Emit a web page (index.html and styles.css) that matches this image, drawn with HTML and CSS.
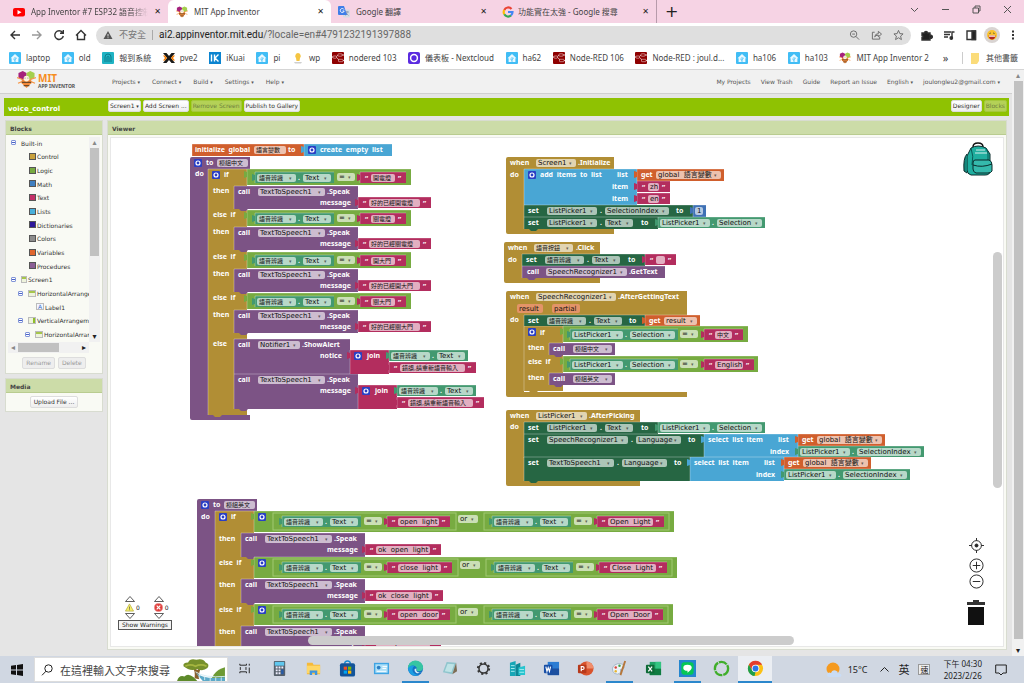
FILE: index.html
```html
<!DOCTYPE html>
<html lang="en">
<head>
<meta charset="utf-8">
<title>MIT App Inventor</title>
<link rel="stylesheet" href="styles.css">
</head>
<body>
<svg class="defs" aria-hidden="true">
  <symbol id="ha" viewBox="0 0 12 12"><rect width="12" height="12" rx="1" fill="#41bdf5"/><path d="M6 2 10.5 6.2H9.4V10H2.600V6.200H1.500Z" fill="#e8f8ff"/><path d="M6 10V5M6 8.500 4.200 6.800M6 7.500 7.800 6" stroke="#41bdf5" fill="none" stroke-width=".8"/></symbol>
  <symbol id="nr" viewBox="0 0 12 12"><rect width="12" height="12" rx="1" fill="#8f0000"/><path d="M0 5H3C5 5 5 3 7 3H12M3 5C6 5 6 8.500 8 8.500H12" stroke="#e9c7c7" fill="none"/><rect x="6" y="1.800" width="4" height="2.400" rx=".6" fill="#8f0000" stroke="#e9c7c7" stroke-width=".6"/><rect x="6.500" y="7.300" width="4.500" height="2.400" rx=".6" fill="#8f0000" stroke="#e9c7c7" stroke-width=".6"/><rect x="1" y="4" width="3.500" height="2.200" rx=".6" fill="#8f0000" stroke="#e9c7c7" stroke-width=".6"/></symbol>
  <symbol id="bee" viewBox="0 0 20 18"><path d="M6 0 10 2V7L6 9.500 1.500 7V2Z" fill="#a5217c"/><path d="M14 0 18.500 2V7L14 9.500 10 7V2Z" fill="#a4cf4c"/><path d="M0 7 6 9M20 7 14 9M1 13 6 11M19 13 14 11" stroke="#f79646" stroke-width="1.200"/><path d="M5 9H15V13L10 18 5 13Z" fill="#f58a3a"/><path d="M5 12H15M7 15.500H13" stroke="#6f4b2a" stroke-width="1.500"/><circle cx="10" cy="8" r="3" fill="#fff3df"/><path d="M8.500 8v-1M11.500 8v-1" stroke="#555" stroke-width=".8"/></symbol>
</svg>

<header class="tabs">
  <div class="tab"><svg class="fav" viewBox="0 0 12 12"><rect y="2" width="12" height="8.500" rx="2" fill="#f00"/><path d="M4.500 4 8.500 6.200 4.500 8.500Z" fill="#fff"/></svg><span class="tab-title faded">App Inventor #7 ESP32 語音控制</span><button class="x" aria-label="Close tab">✕</button></div>
  <div class="tab active"><svg class="fav"><use href="#bee"/></svg><span class="tab-title">MIT App Inventor</span><button class="x" aria-label="Close tab">✕</button></div>
  <div class="tab google"><svg class="fav" viewBox="0 0 12 12"><rect x="5" y="3.500" width="7" height="8" rx="1" fill="#d5dbe3"/><path d="M7 6h4M9 5v1c0 2-1 3-2 3.500M8 7l2.500 2.500" stroke="#7a8ea8" stroke-width=".7" fill="none"/><path d="M1 0H6L9 9H1Q0 9 0 8V1Q0 0 1 0Z" fill="#3f7ee8"/><path d="M6 3.500A2 2 0 1 0 6.200 5H4.500" stroke="#fff" fill="none" stroke-width=".9"/></svg><span class="tab-title">Google 翻譯</span><button class="x" aria-label="Close tab">✕</button></div>
  <div class="tab divided"><svg class="fav" viewBox="0 0 12 12" fill="none" stroke-width="2.200"><path d="M9.500 3A4.300 4.300 0 0 0 2.300 4" stroke="#ea4335"/><path d="M2.300 4A4.300 4.300 0 0 0 2.300 8.300" stroke="#fbbc05"/><path d="M2.300 8.300A4.300 4.300 0 0 0 9 9.400" stroke="#34a853"/><path d="M6 6H10.500Q10.500 8.200 9 9.400" stroke="#4285f4"/></svg><span class="tab-title">功能實在太強 - Google 搜尋</span><button class="x" aria-label="Close tab">✕</button></div>
  <button class="newtab" aria-label="New tab">+</button>
  <div class="winctl">
    <svg viewBox="0 0 9 9"><path d="M1 3 4.500 6.500 8 3"/></svg><svg viewBox="0 0 9 9"><path d="M1 4.500H8"/></svg><svg viewBox="0 0 9 9"><path d="M1 3H6.500V8H1ZM3 3V1H8V6H6.500"/></svg><svg viewBox="0 0 9 9"><path d="M1 1 8 8M8 1 1 8"/></svg>
  </div>
</header>

<nav class="toolbar">
  <svg class="nav" viewBox="0 0 12 12"><path d="M11 6H2M6 2 2 6 6 10"/></svg>
  <svg class="nav dim" viewBox="0 0 12 12"><path d="M1 6H10M6 2 10 6 6 10"/></svg>
  <svg class="nav" viewBox="0 0 12 12"><path d="M9.500 3.500A4.300 4.300 0 1 0 10.300 7M10.300 1V4.300H7"/></svg>
  <svg class="nav" viewBox="0 0 12 12"><path d="M1 6.500 6 1.500 11 6.500M2.500 5.500V10.500H9.500V5.500"/></svg>
  <div class="omni">
    <svg class="warn" viewBox="0 0 10 10"><path d="M5 1 9.500 9H.5Z" fill="#555"/><path d="M5 4V6.500M5 7.300V8.200" stroke="#ddd"/></svg>
    <span class="unsafe">不安全</span>
    <label class="urlbox"><span class="host">ai2.appinventor.mit.edu</span><span>/?locale=en#4791232191397888</span></label>
    <svg class="nav thin" viewBox="0 0 12 12"><circle cx="5" cy="5" r="3.500"/><path d="M7.500 7.500 11 11M3.500 5h3"/></svg>
    <svg class="nav thin" viewBox="0 0 12 12"><path d="M4 3H1.500V10.500H9.500V8M4 8Q4.500 4.500 8 4.500V2L11.500 5 8 8V6.200Q5 6.200 4 8"/></svg>
    <svg class="nav thin" viewBox="0 0 12 12"><path d="M6 1 7.500 4.500 11 4.800 8.300 7.200 9.200 11 6 9 2.800 11 3.700 7.200 1 4.800 4.500 4.500Z"/></svg>
  </div>
  <svg class="nav" viewBox="0 0 12 12"><path d="M1 4H3.500A1.500 1.500 0 1 1 6.500 4H9V6.500A1.500 1.500 0 1 1 9 9V11H1V8.500A1 1 0 0 0 1 6.500Z" fill="#222"/></svg>
  <svg class="nav" viewBox="0 0 12 12"><path d="M1 3H8M1 5.500H7M1 8H5M9 9V3H11.500"/><circle cx="8.300" cy="9" r="1.200" fill="#222"/></svg>
  <svg class="nav" viewBox="0 0 12 12"><path d="M2 2H10.500V10.500H2Z"/><path d="M7 2H10.500V10.500H7Z" fill="#222"/></svg>
  <svg class="avatar" viewBox="0 0 16 16"><circle cx="8" cy="8" r="8" fill="#d9d4d2"/><circle cx="8" cy="8" r="5" fill="#f9c22e"/><path d="M4.500 8.500H11.500Q11 12.500 8 12.500 5 12.500 4.500 8.500" fill="#b3261e"/><path d="M5 8.500H11V9.700H5Z" fill="#fff"/><path d="M5.500 6.500 6.800 6M10.500 6.500 9.200 6" stroke="#553" /></svg>
  <svg class="nav dots" viewBox="0 0 12 12"><path d="M6 1.500V3.500M6 5V7M6 8.500V10.500" stroke-width="2"/></svg>
</nav>

<nav class="bookmarks">
  <div class="marks">
    <a href="#"><svg><use href="#ha"/></svg>laptop</a>
    <a href="#"><svg><use href="#ha"/></svg>old</a>
    <a href="#"><svg viewBox="0 0 12 12"><rect width="12" height="12" rx="1" fill="#1fb3c4"/><path d="M3 10V5A3 3 0 0 1 9 5V10M5 10V5.500A1 1 0 0 1 7 5.500V10" stroke="#0d7f8d" fill="none"/></svg>報到系統</a>
    <a href="#"><svg viewBox="0 0 12 12"><path d="M0 1H3.500L6 4 8.500 1H12L8 6 12 11H8.500L6 8 3.500 11H0L4 6Z" fill="#1a1a1a"/><path d="M0 3.500H2L4 6 2 8.500H0L2 6ZM12 3.500H10L8 6 10 8.500H12L10 6Z" fill="#f57c00"/></svg>pve2</a>
    <a href="#"><svg viewBox="0 0 12 12"><rect width="12" height="12" fill="#0b84d0"/><path d="M2.500 2.500V9.500M5.500 2.500V9.500M9.500 2.500 6 6 9.500 9.500" stroke="#fff" stroke-width="1.400" fill="none"/></svg>iKuai</a>
    <a href="#"><svg><use href="#ha"/></svg>pi</a>
    <a href="#"><svg viewBox="0 0 12 12"><path d="M2 10H10L9 11.500H3Z" fill="#cfcfcf"/><path d="M6 1A3 3 0 0 1 8 6L7.500 9H4.500L4 6A3 3 0 0 1 6 1" fill="#f5c542"/></svg>wp</a>
    <a href="#"><svg><use href="#nr"/></svg>nodered 103</a>
    <a href="#"><svg viewBox="0 0 12 12"><rect width="12" height="12" rx="2" fill="#5b2be0"/><circle cx="6" cy="6" r="3.400" fill="none" stroke="#fff" stroke-width="1.500"/></svg>儀表板 - Nextcloud</a>
    <a href="#"><svg><use href="#ha"/></svg>ha62</a>
    <a href="#"><svg><use href="#nr"/></svg>Node-RED 106</a>
    <a href="#"><svg><use href="#nr"/></svg>Node-RED : joul.d...</a>
    <a href="#"><svg><use href="#ha"/></svg>ha106</a>
    <a href="#"><svg><use href="#ha"/></svg>ha103</a>
    <a href="#"><svg><use href="#bee"/></svg>MIT App Inventor 2</a>
  </div>
  <button class="more" aria-label="More bookmarks">»</button>
  <a href="#" class="others"><svg viewBox="0 0 12 12"><path d="M2 1H10V9L8 12H2Z" fill="#fbdc7a"/></svg>其他書籤</a>
</nav>

<div class="page">
  <main class="app">
    <div class="topmenu">
      <svg class="logo-bee"><use href="#bee"/></svg>
      <div class="logo"><b>MIT</b><span>APP INVENTOR</span></div>
      <div class="menu left"><button>Projects <i>▾</i></button><button>Connect <i>▾</i></button><button>Build <i>▾</i></button><button>Settings <i>▾</i></button><button>Help <i>▾</i></button></div>
      <div class="menu right"><button>My Projects</button><button>View Trash</button><button>Guide</button><button>Report an Issue</button><button>English <i>▾</i></button><button>joulongleu2@gmail.com <i>▾</i></button></div>
    </div>
    <div class="greenbar">
      <h1>voice_control</h1>
      <div class="btns"><button>Screen1 <i>▾</i></button><button>Add Screen ...</button><button disabled>Remove Screen</button><button>Publish to Gallery</button></div>
      <div class="btns"><button>Designer</button><button disabled>Blocks</button></div>
    </div>
    <div class="cols">
      <aside>
        <section class="panel">
          <h2>Blocks</h2>
          <div class="treewrap">
            <ul class="tree">
              <li><span class="tg"></span>Built-in</li>
              <li class="d1"><span class="sw control"></span>Control</li>
              <li class="d1"><span class="sw logic"></span>Logic</li>
              <li class="d1"><span class="sw math"></span>Math</li>
              <li class="d1"><span class="sw text"></span>Text</li>
              <li class="d1"><span class="sw lists"></span>Lists</li>
              <li class="d1"><span class="sw dict"></span>Dictionaries</li>
              <li class="d1"><span class="sw colors"></span>Colors</li>
              <li class="d1"><span class="sw vars"></span>Variables</li>
              <li class="d1"><span class="sw procs"></span>Procedures</li>
              <li><span class="tg"></span><span class="comp"></span>Screen1</li>
              <li class="n1"><span class="tg"></span><span class="comp wide"></span>HorizontalArrange</li>
              <li class="n3"><span class="comp lbl">A</span>Label1</li>
              <li class="n1"><span class="tg"></span><span class="comp vert"></span>VerticalArrangem</li>
              <li class="n2"><span class="tg"></span><span class="comp wide"></span>HorizontalArrar</li>
            </ul>
            <div class="vs"><span>▴</span><div class="thumb"></div><span class="dk">▾</span></div>
            <div class="hs"><span>◂</span><div class="thumb"></div><span class="dk">▸</span></div>
          </div>
          <div class="pair"><button disabled>Rename</button><button disabled>Delete</button></div>
        </section>
        <section class="panel media">
          <h2>Media</h2>
          <div class="pair"><button>Upload File ...</button></div>
        </section>
      </aside>
      <section class="panel viewer">
        <h2>Viewer</h2>
        <div class="workspace">
          <svg id="canvas" class="canvas" role="img" aria-label="Blocks workspace"></svg>
          <div class="warnings">
            <div class="counts">
              <div><svg viewBox="0 0 10 6"><path d="M.5 5.500 5 .5 9.500 5.500Z"/></svg><p><svg viewBox="0 0 10 10"><path d="M5 1 9.500 9H.5Z" fill="#f6ee6a" stroke="#b5ad3c"/><path d="M5 4V6.500M5 7V8" stroke="#554"/></svg>0</p><svg viewBox="0 0 10 6"><path d="M.5.5 5 5.500 9.500.5Z"/></svg></div>
              <div><svg viewBox="0 0 10 6"><path d="M.5 5.500 5 .5 9.500 5.500Z"/></svg><p><svg viewBox="0 0 10 10"><circle cx="5" cy="5" r="4.500" fill="#e0403c" stroke="#e88" /><path d="M3 3 7 7M7 3 3 7" stroke="#fff" stroke-width="1.300"/></svg>0</p><svg viewBox="0 0 10 6"><path d="M.5.5 5 5.500 9.500.5Z"/></svg></div>
            </div>
            <button>Show Warnings</button>
          </div>
          <svg class="backpack" viewBox="0 0 30 34"><path d="M10 5Q10 1 15 1T20 5" fill="none" stroke="#111" stroke-width="1.500"/><path d="M8 6Q15 2 23 6L27 12V29Q27 33 22 33H8Q4 32 4 28V14Z" fill="#1fae9f" stroke="#0b2b2b"/><path d="M4 12Q0 16 1 29L4 31" fill="#14877c" stroke="#0b2b2b"/><path d="M8 6Q11 14 9 23M23 6Q26 10 25 18" fill="none" stroke="#075a55"/><path d="M12 18H26Q29 19 29 23V29Q28 31 25 31H13Q10 30 10 27V21Q10 18 12 18Z" fill="#35b9ac" stroke="#0b2b2b"/><path d="M10 23Q19 26 29 22" fill="none" stroke="#0b2b2b"/><path d="M13 8H22M12 11H24" stroke="#d7efec"/></svg>
          <div class="zoomers">
            <svg viewBox="0 0 16 16"><circle cx="8" cy="8" r="5.200"/><circle cx="8" cy="8" r="1.600" fill="#222"/><path d="M8 0V3M8 13V16M0 8H3M13 8H16"/></svg>
            <svg viewBox="0 0 16 16"><circle cx="8" cy="8" r="7"/><path d="M8 4V12M4 8H12"/></svg>
            <svg viewBox="0 0 16 16"><circle cx="8" cy="8" r="7"/><path d="M4 8H12"/></svg>
            <svg class="trash" viewBox="0 0 20 26"><path d="M1 2H7V0H13V2H19V5H1Z" fill="#333" stroke="none"/><path d="M2 7H18V25H2Z" fill="#111" stroke="none"/></svg>
          </div>
          <div class="wv"></div><div class="wh"></div>
        </div>
      </section>
    </div>
  </main>
  <div class="pagescroll"><span>▴</span><div></div><span class="dk">▾</span></div>
</div>

<footer class="taskbar">
  <svg class="start" viewBox="0 0 12 12"><path d="M0 1.800 5 1V5.600H0ZM6 .9 12 0V5.600H6ZM0 6.500H5V11L0 10.300ZM6 6.500H12V12L6 11.100Z"/></svg>
  <label class="search"><svg viewBox="0 0 12 12"><circle cx="7.500" cy="4.500" r="3.700"/><path d="M5 7.200 1 11.300"/></svg><input type="text" placeholder="在這裡輸入文字來搜尋" aria-label="Search"><svg class="scene" viewBox="0 0 52 25"><path d="M0 25Q2 18 8 20 12 16 18 21L22 25Z" fill="#5e8a2a"/><path d="M52 10Q44 12 40 18L36 25H52Z" fill="#6d9a33"/><path d="M19 22Q20 14 17 10L22 13 27 9Q23 15 24 23Z" fill="#8a5f2a"/><path d="M7 9Q6 5 12 5 14 0 21 2 28 0 31 5 36 7 33 11 28 15 22 12 14 15 7 9" fill="#76902b"/><path d="M9 9Q14 6 20 9 26 6 32 9" stroke="#a6b640" fill="none" stroke-width="2"/><path d="M20 16Q30 24 52 21V25H28Z" fill="#5ba9c8"/><path d="M20 15Q30 22 52 20M24 17V22M30 20V24M36 21V25M42 21V25M48 21V25" stroke="#d6eef5" fill="none"/></svg></label>
  <div class="apps">
    <span><svg viewBox="0 0 18 18" fill="none" stroke="#222"><path d="M3 4V5.500H10V4M3 14V12.500H10V14M3.500 7.500V10.500M9.500 7.500V10.500M13 4V6M13 8V14"/></svg></span>
    <span><svg viewBox="0 0 18 18"><rect x="3" y="1" width="12" height="16" rx="1" fill="#56606b"/><rect x="4" y="2" width="10" height="4" fill="#5fc7ee"/><path d="M5 8h2M8 8h2M11 8h2M5 11h2M8 11h2M5 14h2M8 14h2" stroke="#eef" stroke-width="2"/><path d="M12 10V15" stroke="#265ba8" stroke-width="2.500"/></svg></span>
    <span><svg viewBox="0 0 18 18"><path d="M2 3H8L9 5H16V15H2Z" fill="#f5b93a"/><path d="M2 6H16V14H2Z" fill="#ffd766"/><path d="M5 16V11H13V16H10.500V13.500H7.500V16Z" fill="#3f94dc"/></svg></span>
    <span><svg viewBox="0 0 18 18"><path d="M6 4Q6 1 9 1T12 4" fill="none" stroke="#1789d0" stroke-width="1.500"/><rect x="1" y="3.500" width="16" height="14" rx="2" fill="#12549a"/><path d="M5 7H8.500V10.300H5Z" fill="#f25022"/><path d="M9.500 7H13V10.300H9.500Z" fill="#7fba00"/><path d="M5 11.200H8.500V14.500H5Z" fill="#00a4ef"/><path d="M9.500 11.200H13V14.500H9.500Z" fill="#ffb900"/></svg></span>
    <span><svg viewBox="0 0 18 18"><rect x="1" y="3" width="16" height="12" fill="#3ea4e4"/><rect x="2.500" y="4.500" width="13" height="9" fill="#aee0f8"/><circle cx="6" cy="8" r="2" fill="#2c7fc4"/><path d="M10 7H15M10 9H14M4 12H14" stroke="#fff"/></svg></span>
    <span class="run"><svg viewBox="0 0 18 18"><circle cx="9" cy="9" r="8" fill="#1472c4"/><path d="M1 9A8 8 0 0 1 17 8Q17 12 12 12 9 11 10.500 8.500 9 5 5 6 2 7 1 9" fill="#37c5a3"/><path d="M1 9Q3 5 8 6 5 8 6 12 8 16 13 16 3 19 1 9" fill="#1b9de2"/><path d="M10 9Q9 12 12 13 14 14 16 12.500 12 15 9.500 13.500 7.500 12 8 9.500Z" fill="#d5eaf6"/></svg></span>
    <span><svg viewBox="0 0 18 18"><path d="M6 2 16 3 12 15 2 13Z" fill="#8fc5cd"/><path d="M7 4 14 4.500 11 13 4 12Z" fill="#bfe3e6"/><path d="M16 3 17 12 12 15Z" fill="#7d6d54"/></svg></span>
    <span><svg viewBox="0 0 18 18"><circle cx="9" cy="9" r="4.800" fill="none" stroke="#333" stroke-width="1.600"/><circle cx="9" cy="9" r="6" fill="none" stroke="#333" stroke-width="2" stroke-dasharray="2.200 2.512"/></svg></span>
    <span><svg viewBox="0 0 18 18"><path d="M1 3 7 1V17H1Z" fill="#16a6b6"/><path d="M7 5 12 3V17H7Z" fill="#0c8796"/><path d="M10 8 17 6V16H10Z" fill="#27c4cf"/><path d="M2 6H6M2 9H6M2 12H6M11 10H16M11 13H16" stroke="#a8edf0"/></svg></span>
    <span><svg viewBox="0 0 18 18"><rect x="5" y="2" width="12" height="14" fill="#2b7cd3"/><path d="M5 9H17V16H5Z" fill="#1b4f9f"/><rect x="1" y="5" width="9" height="9" rx="1" fill="#174ea6"/><path d="M3 7 4.200 12 5.500 8 6.800 12 8 7" stroke="#fff" fill="none" stroke-width="1.200"/></svg></span>
    <span><svg viewBox="0 0 18 18"><circle cx="10" cy="9" r="7.500" fill="#d9532c"/><path d="M10 1.500A7.500 7.500 0 0 1 17.500 9H10Z" fill="#f08d6b"/><rect x="1" y="5" width="9" height="9" rx="1" fill="#b7391b"/><path d="M4.500 12V7H6Q7.500 7 7.500 8.500T6 10H4.500" stroke="#fff" fill="none" stroke-width="1.200"/></svg></span>
    <span class="run"><svg viewBox="0 0 18 18"><path d="M2 12Q0 6 7 4 14 3 14 8 13 10 10 10 11 14 7 15 3 15 2 12" fill="#eef3f7" stroke="#8fa8bd" stroke-width=".8"/><circle cx="5" cy="8" r="1.300" fill="#d9453b"/><circle cx="9" cy="6" r="1.300" fill="#3fa34d"/><circle cx="5" cy="12" r="1.300" fill="#e8b530"/><path d="M15 1 10 16" stroke="#b5763a" stroke-width="2"/></svg></span>
    <span><svg viewBox="0 0 18 18"><rect x="5" y="2" width="12" height="14" fill="#21a366"/><path d="M5 9H17V16H5Z" fill="#107c41"/><path d="M11 2H17V9H11Z" fill="#33c481"/><rect x="1" y="5" width="9" height="9" rx="1" fill="#0f6b38"/><path d="M3.500 7 7.500 12M7.500 7 3.500 12" stroke="#fff" stroke-width="1.300"/></svg></span>
    <span class="run"><svg viewBox="0 0 18 18"><rect width="18" height="18" fill="#2486cf"/><rect x="2.500" y="2.500" width="13" height="13" rx="3" fill="#06c755"/><path d="M9 5Q13.500 5 13.500 8.500 13 11 9 13.500V11.500Q4.500 11.500 4.500 8.500 4.500 5 9 5" fill="#fff"/></svg></span>
    <span><svg viewBox="0 0 18 18"><circle cx="9" cy="9" r="7" fill="none" stroke="#3fae2a" stroke-width="2.500" stroke-dasharray="9 1"/></svg></span>
    <span class="run now"><svg viewBox="0 0 18 18"><circle cx="9" cy="9" r="8" fill="#fbc116"/><path d="M2 5A8 8 0 0 1 16 5H9L5.500 11Z" fill="#e33b2e"/><path d="M2 5 5.500 11 9 13 8 17A8 8 0 0 1 2 5" fill="#1e9e4a"/><circle cx="9" cy="9" r="4" fill="#fff"/><circle cx="9" cy="9" r="3.100" fill="#2a75e8"/></svg></span>
  </div>
  <div class="tray">
    <svg class="wx" viewBox="0 0 16 16"><circle cx="7" cy="7" r="6.500" fill="#f59a1f"/><path d="M4 15Q0 15 1.500 11.500 3 10 5 11 6 7.500 9.500 8.500 12 9 12 11.500 15.500 11 15.500 13.500 15 15 13 15Z" fill="#c9dcf5"/></svg>
    <span>15°C</span>
    <svg class="chev" viewBox="0 0 9 9"><path d="M.5 6.500 4.500 2.500 8.500 6.500"/></svg>
    <span class="ime">英</span><span class="box">速</span>
    <time>下午 04:30<br>2023/2/26</time>
    <svg class="note" viewBox="0 0 12 12"><path d="M.7 1H11.300V9H8L6 11 4 9H.7Z"/></svg>
  </div>
</footer>
<script src="blocks.js"></script>
</body>
</html>
```
FILE: styles.css
```css
* { box-sizing: border-box; }
body { margin: 0; height: 100vh; display: flex; flex-direction: column; overflow: hidden; background: #fff; color: #333; font: 8px/12px "Noto Sans", "Noto Sans CJK TC", sans-serif; }
button { font: inherit; color: inherit; border: 0; background: none; padding: 0; white-space: nowrap; }
a { color: inherit; text-decoration: none; }
i { font-style: normal; }
h1, h2, p, ul { margin: 0; padding: 0; }
.defs { position: absolute; width: 0; height: 0; }

.tabs { display: flex; flex: none; height: 23px; background: #f6d3e4; color: #444; }
.tab { flex: 0 0 163px; display: flex; align-items: center; gap: 6px; padding: 0 7px 0 13px; min-width: 0; }
.tab:first-child { flex-basis: 168px; }
.tab.active { background: #fff; border-radius: 6px 6px 0 0; padding-left: 8px; }
.tab.google { padding-left: 7px; }
.tab.divided { border-right: 1px solid #b79bab; padding-left: 8px; }
.tab.divided .tab-title { margin-left: -2px; }
.fav { flex: none; width: 12px; height: 12px; }
.tab-title { flex: 1; overflow: hidden; white-space: nowrap; }
.faded { -webkit-mask-image: linear-gradient(90deg, #000 85%, transparent); mask-image: linear-gradient(90deg, #000 85%, transparent); }
.x { font: bold 8px/10px "DejaVu Sans", sans-serif; color: #222; }
.newtab { font: 16px/23px "DejaVu Sans", sans-serif; color: #222; padding: 0 8px; }
.winctl { margin-left: auto; display: flex; gap: 22px; padding: 5px 12px 0 0; }
.winctl svg { width: 9px; height: 9px; fill: none; stroke: #555; stroke-width: 1; }

.toolbar { display: flex; flex: none; align-items: center; height: 24px; padding: 0 5px 0 9px; gap: 10px; }
.nav { flex: none; width: 12px; height: 12px; fill: none; stroke: #333; stroke-width: 1.4; }
.dim { stroke: #999; }
.thin { stroke: #666; stroke-width: 1; width: 11px; }
.omni { flex: 1; display: flex; align-items: center; gap: 11px; height: 19px; border-radius: 10px; background: #dfdfdf; padding: 0 7px 0 7px; margin-left: -1px; }
.warn { width: 10px; height: 10px; }
.unsafe { font-size: 9px; color: #777; border-right: 1px solid #aaa; padding-right: 6px; margin-left: -5px; line-height: 10px; }
.urlbox { flex: 1; font: 10px/12px Roboto, sans-serif; color: #666; margin-left: -5px; }
.host { color: #222; }
.avatar { width: 16px; height: 16px; margin: 0 -3px; }

.bookmarks { display: flex; flex: none; align-items: center; height: 23px; padding: 0 6px 1px 9px; border-bottom: 1px solid #d5d5d5; white-space: nowrap; color: #444; }
.marks { flex: 0 0 920px; display: flex; justify-content: space-between; }
.bookmarks a { display: flex; align-items: center; gap: 5px; }
.bookmarks svg { width: 12px; height: 12px; flex: none; }
.more { margin: 0 auto; font-size: 11px; }
.others { border-left: 1px solid #ccc; padding-left: 6px; }

.page { flex: 1; min-height: 0; display: flex; background: #e5e5e5; font: 6px/8px "DejaVu Sans", "Noto Sans CJK TC", sans-serif; color: #333; }
.app { flex: 1; min-width: 0; display: flex; flex-direction: column; }
.topmenu { flex: none; height: 24px; display: flex; align-items: center; background: #f1f1f1; border-bottom: 1px solid #d0d0d0; padding: 0 12px 0 17px; }
.logo-bee { width: 19px; height: 17px; flex: none; margin-top: -4px; }
.logo { flex: 0 0 76px; display: flex; flex-direction: column; padding-left: 2px; }
.logo b { font: bold 10px/9px "Noto Sans", sans-serif; color: #f68d1f; }
.logo span { font: bold 5px/6px "Noto Sans", sans-serif; color: #555; white-space: nowrap; }
.menu { display: flex; gap: 12px; color: #555; }
.menu i, .btns i { font-size: 5px; }
.right { margin-left: auto; gap: 10px; }
.greenbar { flex: none; height: 18px; margin: 4px 3px 4px 4px; background: #8fc202; display: flex; align-items: flex-start; padding: 2px 2px 0 4px; }
.greenbar h1 { flex: 0 0 100px; font: bold 7px/8px "DejaVu Sans", sans-serif; color: #fff; padding-top: 5px; }
.btns { display: flex; gap: 2px; }
.btns + .btns { margin-left: auto; }
.btns button, .pair button { height: 12px; padding: 0 3px; border-radius: 2px; background: linear-gradient(#fff, #eee); color: #333; border: 1px solid #ddd; line-height: 8px; padding-bottom: 1px; }
.btns button { padding: 0 1px 1px; }
.btns button:disabled { background: #b4d157; border-color: #a5c83c; color: #6f8140; }

.cols { flex: 1; min-height: 0; display: flex; align-items: flex-start; gap: 4px; padding: 0 5px 6px 5px; }
aside { flex: 0 0 98px; display: grid; gap: 4px; }
.panel { background: #f9faf4; border: 1px solid #d8dcd0; }
.panel h2 { height: 14px; background: #ccdca8; border-bottom: 1px solid #b9cc90; font: bold 6px/15px "DejaVu Sans", sans-serif; color: #444; padding-left: 4px; }
.treewrap { display: grid; grid-template: 205px 11px / 1fr 11px; margin: 2px 2px 0; overflow: hidden; }
.tree { list-style: none; display: grid; grid-auto-rows: 1fr; overflow: hidden; min-width: 0; }
.tree li { display: flex; align-items: center; gap: 1px; padding: 0 0 0 3px; white-space: nowrap; min-height: 0; }
.tree .d1 { padding-left: 21px; }
.tree .n1 { padding-left: 10px; }
.tree .n2 { padding-left: 17px; }
.tree .n3 { padding-left: 28px; }
.tg { flex: none; width: 5px; height: 5px; border: 1px solid #8295d8; border-radius: 1px; background: linear-gradient(#fff 1px, #4a63c8 1px, #4a63c8 2px, #fff 2px); margin-right: 4px; margin-top: -2px; }
.sw { flex: none; width: 7px; height: 7px; border: 1px solid #555; margin-top: -2px; }
.control { background: #c9a13b; } .logic { background: #77ab41; } .math { background: #3f7fc1; } .text { background: #c43067; }
.lists { background: #49b0dc; } .dict { background: #2d1799; } .colors { background: #8c8c8c; } .vars { background: #e0652d; } .procs { background: #8b5f95; }
.comp { flex: none; width: 6px; height: 7px; border: 1px solid #bbb; background: linear-gradient(#a6c64c 2px, #eef3dc 2px); margin-top: -2px; }
.comp.wide { width: 8px; }
.comp.vert { width: 8px; background: linear-gradient(90deg, #eef3dc 4px, #8fbf2a 4px); }
.comp.lbl { width: 8px; background: #f2f6ff; color: #3b6fc4; line-height: 6px; text-align: center; }
.vs { background: #f1f1f1; display: flex; flex-direction: column; align-items: center; }
.vs .thumb { width: 9px; height: 108px; background: #c1c1c1; }
.vs .dk { margin-top: auto; }
.vs span, .hs span, .pagescroll span { font: 8px/11px "DejaVu Sans", sans-serif; color: #888; }
.vs .dk, .hs .dk, .pagescroll .dk { color: #222; }
.hs { background: #f1f1f1; display: flex; align-items: center; padding: 0 3px; }
.hs .thumb { width: 41px; height: 9px; background: #c1c1c1; margin-left: 3px; }
.hs .dk { margin-left: auto; }
.pair { display: flex; justify-content: center; gap: 3px; padding: 4px 0; }
.pair button:disabled { color: #999; background: #eee; }
.media .pair { padding: 3px 0; }
.viewer { flex: 1; align-self: stretch; display: flex; flex-direction: column; min-width: 0; }
.workspace { flex: 1; min-height: 0; margin: 2px; border: 1px solid #e8e8e8; background: #fff; position: relative; overflow: hidden; }
.canvas { position: absolute; inset: 0; width: 100%; height: 100%; }
.canvas text { font-family: "DejaVu Sans", "Noto Sans CJK TC", sans-serif; font-size: 7px; white-space: pre; fill: #111; }
.canvas .label { font-family: "Noto Sans", "Noto Sans CJK TC", sans-serif; font-weight: bold; fill: #fff; }
.canvas .cjk { font-size: 6px; }
.canvas .arrow { font-size: 5px; }
.warnings { position: absolute; left: 7px; bottom: 16px; color: #222; }
.counts { display: flex; gap: 14px; padding-left: 7px; }
.counts div { display: grid; gap: 1px; }
.counts p { display: flex; align-items: center; gap: 2px; }
.counts svg { width: 10px; height: 6px; fill: #fff; stroke: #333; stroke-width: .8; }
.counts p svg { width: 9px; height: 9px; }
.warnings button { border: 1px solid #555; background: #f3f3f3; padding: 0 3px; margin-top: 1px; font: 6px/8px "DejaVu Sans", sans-serif; }
.backpack { position: absolute; right: 9px; top: 4px; width: 32px; height: 34px; }
.zoomers { position: absolute; right: 17px; bottom: 20px; display: grid; gap: 1px; justify-items: center; }
.zoomers svg { width: 15px; height: 15px; fill: none; stroke: #222; stroke-width: 1; }
.zoomers svg:first-child { margin-bottom: 4px; }
.zoomers .trash { width: 20px; height: 26px; margin-top: 10px; }
.wv, .wh { position: absolute; background: #ccc; border-radius: 5px; }
.wv { width: 9px; right: 1px; top: 114px; height: 236px; }
.wh { height: 9px; bottom: 1px; left: 197px; width: 486px; }
.pagescroll { flex: 0 0 12px; display: flex; flex-direction: column; align-items: center; background: #f1f1f1; }
.pagescroll div { width: 9px; flex: 1; background: #c1c1c1; margin-bottom: 6px; }

.taskbar { flex: none; height: 27px; display: flex; align-items: center; background: #d0d7e2; color: #222; }
.start { width: 12px; height: 12px; margin: 0 11px; fill: #111; flex: none; }
.search { flex: none; width: 194px; height: 25px; background: #fff; border: 1px solid #ddd; display: flex; align-items: center; padding-left: 6px; }
.search svg { flex: none; width: 12px; height: 12px; fill: none; stroke: #222; }
.search .scene { width: 52px; height: 23px; stroke: none; }
.search input { flex: 1; width: 0; min-width: 0; border: 0; padding: 0 0 0 7px; outline: 0; font: 11px "Noto Sans CJK TC", sans-serif; }
.search input::placeholder { color: #444; opacity: 1; }
.apps { display: flex; height: 27px; }
.apps span { width: 34px; display: grid; place-items: center; border: solid transparent; border-width: 0 0 2px; }
.apps svg { width: 17px; height: 17px; }
.apps .run { background: linear-gradient(#2b87cc, #2b87cc) 50% 100% / 27px 2px no-repeat border-box; }
.apps .now { background: linear-gradient(#2b87cc, #2b87cc) 50% 100% / 34px 2px no-repeat border-box, #ebeef3; }
.tray { margin-left: auto; display: flex; align-items: center; gap: 13px; padding-right: 17px; font-size: 9px; }
.wx { width: 16px; height: 16px; margin-right: -7px; }
.chev, .note { width: 9px; height: 9px; fill: none; stroke: #222; }
.note { width: 12px; height: 12px; }
.ime { font-size: 11px; margin: 0 -4px; }
.box { border: 1px solid #999; background: #eee; font-size: 8px; line-height: 9px; padding: 0 1px; }
time { font-size: 8px; line-height: 12px; text-align: center; }
```
FILE: blocks.js
```javascript
const C = {
  gold: '#b18e35', proc: '#7c5385', logic: '#77ab41', get: '#439970', set: '#266643',
  text: '#b32d5e', list: '#49a6d4', vari: '#d05f2d', math: '#3f71b5'
};
const out = [];
const ORIGIN_X = 111, ORIGIN_Y = 138;

function label(x, y, s) { out.push(`<text class="label" x="${x}" y="${y}">${s}</text>`); }

/* An editable field; a drop-down one carries an arrow at its right end. */
function field(x, y, w, s, arrow) {
  const cls = /^[\u4e00-\u9fff]/.test(s) ? ' class="cjk"' : '';
  out.push(`<rect x="${x}" y="${y}" width="${w}" height="8" rx="2" fill="#fff" fill-opacity=".62"/>`);
  out.push(`<text${cls} x="${x + 2}" y="${y + 6}">${s}</text>`);
  if (arrow) out.push(`<text class="arrow" x="${x + w - 7}" y="${y + 6}" fill-opacity=".6">▾</text>`);
}

function block(x, y, w, h, color, kind) {
  out.push(`<rect x="${x}" y="${y}" width="${w}" height="${h}" fill="${color}"/>`);
  out.push(`<path d="M${x} ${y + h}V${y}H${x + w}" fill="none" stroke="#fff" stroke-opacity=".3"/>`);
  if (kind === 'value') out.push(`<path d="M${x} ${y + 3}L${x - 3} ${y + 2}V${y + 9}L${x} ${y + 8}Z" fill="${color}"/>`);
  if (kind === 'last') out.push(`<path d="M${x + 5} ${y + h}h9l-2 2h-5z" fill="${color}"/>`);
}

/* A C-shaped block that wraps a stack of statements. */
function wrap(x, y, w, head, bottom, foot, color) {
  out.push(`<path d="M${x + 2} ${y}H${x + w}V${y + head}H${x + 18}V${bottom - foot}H${x + w}V${bottom}H${x + 2}Q${x} ${bottom} ${x} ${bottom - 2}V${y + 2}Q${x} ${y} ${x + 2} ${y}Z" fill="${color}"/>`);
}

function gear(x, y) {
  out.push(`<rect x="${x}" y="${y}" width="8" height="8" rx="1" fill="#2a3fc4"/><circle cx="${x + 4}" cy="${y + 4}" r="2" fill="none" stroke="#fff" stroke-width="1.200"/>`);
}

function literal(x, y, w, s) {
  block(x, y, w, 11, C.text, 'value');
  label(x + 5, y + 9, '“');
  field(x + 11, y + 2, w - 22, s);
  label(x + w - 8, y + 9, '”');
}

function getter(x, y, comp, w1, prop, w2) {
  block(x, y, w1 + w2 + 12, 11, C.get, 'value');
  field(x + 2, y + 2, w1, comp, true);
  label(x + w1 + 4, y + 8, '.');
  field(x + w1 + 9, y + 2, w2, prop, true);
}

function getVar(x, y, w, s) {
  block(x, y, w, 12, C.vari, 'value');
  label(x + 4, y + 8, 'get');
  field(x + 19, y + 2, w - 22, s, true);
}

function setter(x, y, w, h, comp, w1, prop, w2, toX, kind) {
  block(x, y, w, h, C.set, kind);
  label(x + 4, y + 8, 'set');
  field(x + 23, y + 2, w1, comp, true);
  label(x + w1 + 26, y + 8, '.');
  field(x + w1 + 31, y + 2, w2, prop, true);
  label(toX, y + 8, 'to');
}

function equals(x, y) { field(x, y, 18, '=', true); }

function speak(x, y, h, kind) {
  block(x, y, 124, h, C.proc, kind);
  label(x + 4, y + 8, 'call');
  field(x + 24, y + 2, 67, 'TextToSpeech1', true);
  label(x + 93, y + 8, '.Speak');
  label(x + 86, y + 19, 'message');
}

const VOICE = '語音辨識';

/* initialize global */
block(192, 144, 112, 12, C.vari);
label(195, 152, 'initialize  global');
field(254, 146, 32, '語言變數');
label(288, 152, 'to');
block(304, 144, 88, 12, C.list, 'value');
gear(308, 146);
label(320, 152, 'create  empty  list');

/* Chinese procedure */
wrap(190, 157, 60, 12, 420, 5, C.proc);
gear(194, 159);
label(206, 165, 'to');
field(217, 159, 31, '模組中文');
label(195, 176, 'do');
block(208, 169, 39, 246, C.gold, 'last');
gear(212, 171);
[[169, '開電燈'], [210, '關電燈'], [252, '開大門'], [293, '關大門']].forEach(([y, word], i) => {
  if (i) label(213, y + 7, 'else  if'); else label(224, y + 8, 'if');
  block(247, y, 164, 16, C.logic, 'value');
  getter(255, y + 3, VOICE, 39, 'Text', 28);
  equals(337, y + 4);
  literal(360, y + 3, 46, word);
  label(213, y + 24, 'then');
  speak(234, y + 17, 23, 'last');
  literal(358, y + 28, 73, '好的已經' + word);
});
label(213, 346, 'else');
block(234, 339, 116, 35, C.proc);
label(238, 347, 'call');
field(258, 341, 42, 'Notifier1', true);
label(302, 347, '.ShowAlert');
label(320, 358, 'notice');
speak(234, 374, 35, 'last');
[[350, 350], [358, 385]].forEach(([x, y]) => {
  block(x, y, 39, 24, C.text, 'value');
  gear(x + 4, y + 2);
  label(x + 17, y + 8, 'join');
  getter(x + 39, y, VOICE, 39, 'Text', 28);
  literal(x + 39, y + 12, 87, '錯誤,請重新語音輸入');
});

/* when Screen1.Initialize */
wrap(506, 157, 108, 12, 234, 5, C.gold);
label(510, 165, 'when');
field(536, 159, 40, 'Screen1', true);
label(578, 165, '.Initialize');
label(510, 177, 'do');
block(524, 169, 113, 36, C.list);
gear(528, 171);
label(540, 177, 'add  items  to  list');
label(617, 177, 'list');
label(612, 189, 'item');
label(612, 201, 'item');
getVar(637, 169, 87, 'global  語言變數');
literal(637, 181, 33, 'zh');
literal(637, 193, 33, 'en');
setter(524, 205, 169, 12, 'ListPicker1', 50, 'SelectionIndex', 64, 676);
block(693, 205, 13, 12, C.math, 'value');
field(695, 207, 8, '1');
setter(524, 217, 134, 12, 'ListPicker1', 50, 'Text', 28, 641, 'last');
getter(658, 217, 'ListPicker1', 50, 'Selection', 45);

/* when button.Click */
wrap(504, 242, 96, 12, 283, 5, C.gold);
label(508, 250, 'when');
field(534, 244, 39, '語音按鈕', true);
label(576, 250, '.Click');
label(508, 262, 'do');
setter(522, 254, 123, 12, VOICE, 39, 'Text', 28, 628);
literal(645, 254, 31, '');
block(522, 266, 143, 12, C.proc, 'last');
label(527, 274, 'call');
field(546, 268, 81, 'SpeechRecognizer1', true);
label(629, 274, '.GetText');

/* when SpeechRecognizer1.AfterGettingText */
wrap(506, 291, 181, 24, 397, 5, C.gold);
label(510, 299, 'when');
field(536, 293, 80, 'SpeechRecognizer1', true);
label(618, 299, '.AfterGettingText');
[[517, 26, 'result'], [552, 28, 'partial']].forEach(([x, w, s]) => {
  out.push(`<rect x="${x}" y="304" width="${w}" height="9" rx="2" fill="#e39468"/><text x="${x + 2}" y="311">${s}</text>`);
});
label(510, 322, 'do');
block(524, 326, 39, 65, C.gold, 'last');
setter(524, 315, 121, 11, VOICE, 39, 'Text', 28, 629);
getVar(645, 315, 55, 'result');
gear(528, 328);
label(540, 335, 'if');
[[326, 185, 39, '中文', '模組中文'], [356, 195, 50, 'English', '模組英文']].forEach(([y, w, lw, word, name], i) => {
  if (i) label(528, y + 8, 'else  if');
  block(563, y, w, 16, C.logic, 'value');
  getter(570, y + 3, 'ListPicker1', 51, 'Selection', 45);
  equals(680, y + 4);
  literal(704, y + 3, lw, word);
  label(528, y + 24, 'then');
  block(549, y + 17, 66, 12, C.proc, 'last');
  label(553, y + 25, 'call');
  field(573, y + 19, 39, name, true);
});

/* when ListPicker1.AfterPicking */
wrap(506, 410, 134, 12, 486, 5, C.gold);
label(510, 418, 'when');
field(536, 412, 51, 'ListPicker1', true);
label(589, 418, '.AfterPicking');
label(510, 429, 'do');
setter(524, 422, 134, 12, 'ListPicker1', 50, 'Text', 28, 641);
getter(658, 422, 'ListPicker1', 50, 'Selection', 45);
[[434, 180, 'SpeechRecognizer1', 81, 688], [457, 166, 'TextToSpeech1', 67, 674]].forEach(([y, w, comp, cw, toX], i) => {
  setter(524, y, w, 24, comp, cw, 'Language', 45, toX, i ? 'last' : '');
  const x = 524 + w;
  block(x, y, 94, 24, C.list, 'value');
  label(x + 4, y + 8, 'select  list  item');
  label(x + 74, y + 8, 'list');
  label(x + 66, y + 20, 'index');
  getVar(x + 94, y, 87, 'global  語言變數');
  getter(x + 94, y + 12, 'ListPicker1', 50, 'SelectionIndex', 64);
});

/* English procedure */
wrap(197, 499, 60, 12, 700, 5, C.proc);
gear(201, 501);
label(213, 507, 'to');
field(224, 501, 31, '模組英文');
label(201, 519, 'do');
block(215, 511, 39, 180, C.gold);
gear(219, 513);
[[511, 'open', 'light', 'Open', 'Light', 63, 67, 0], [557, 'close', 'light', 'Close', 'Light', 65, 68, 2], [604, 'open', 'door', 'Open', 'Door', 63, 66, 0]].forEach(([y, a, b, A, B, w1, w2, dx], i) => {
  if (i) label(219, y + 8, 'else  if'); else label(231, y + 8, 'if');
  block(254, y, 354 + dx + w2 - 1, 21, C.logic, 'value');
  gear(258, y + 2);
  out.push(`<rect x="273" y="${y + 2}" width="${w1 + 120}" height="17" fill="none" stroke="#a1c972"/>`);
  getter(282, y + 5, VOICE, 39, 'Text', 28);
  equals(364, y + 6);
  literal(387, y + 5, w1, `${a}  ${b}`);
  field(458 + dx, y + 4, 20, 'or', true);
  out.push(`<rect x="${484 + dx}" y="${y + 2}" width="${w2 + 118}" height="17" fill="none" stroke="#a1c972"/>`);
  getter(492 + dx, y + 5, VOICE, 39, 'Text', 28);
  equals(574 + dx, y + 6);
  literal(597 + dx, y + 5, w2, `${A}  ${B}`);
  label(219, y + 30, 'then');
  speak(241, y + 22, 24, 'last');
  literal(365, y + 33, 76 + dx, `ok  ${a}  ${b}`);
});

document.getElementById('canvas').innerHTML = `<g transform="translate(${-ORIGIN_X} ${-ORIGIN_Y})">${out.join('')}</g>`;
```
